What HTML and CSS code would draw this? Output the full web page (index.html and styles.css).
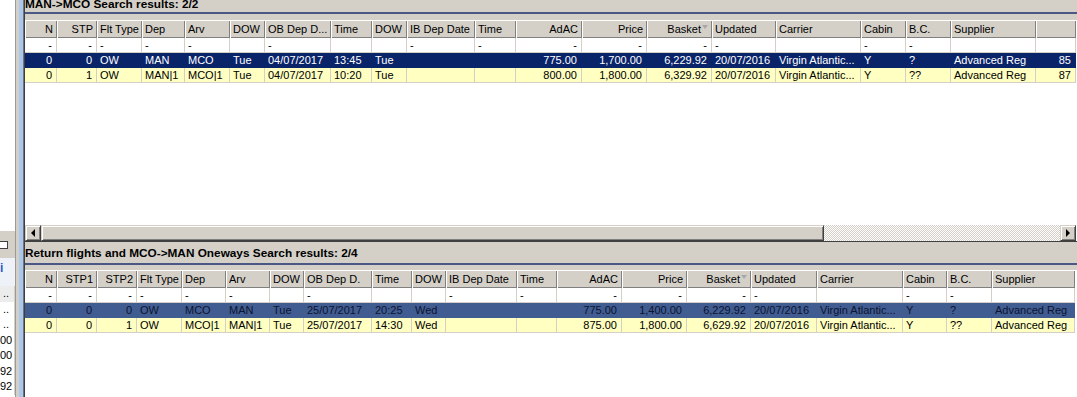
FILE: index.html
```html
<!DOCTYPE html>
<html>
<head>
<meta charset="utf-8">
<link rel="stylesheet" href="styles.css">
</head>
<body>
<div class="app">
  <aside class="side">
    <div class="side-top"></div>
    <div class="side-tool"><span class="side-box"></span></div>
    <div class="side-head"><span class="side-i">i</span></div>
    <div class="side-row shade">..</div>
    <div class="side-row">..</div>
    <div class="side-row">..</div>
    <div class="side-row">00</div>
    <div class="side-row">00</div>
    <div class="side-row">92</div>
    <div class="side-row">92</div>
  </aside>
  <div class="vsplit"></div>
  <main class="main">
    <section class="pane pane-top">
      <div class="title">MAN-&gt;MCO Search results: 2/2</div>
      <div class="grid grid-top">
        <div class="row head">
          <div class="c r">N</div><div class="c r">STP</div><div class="c">Flt Type</div><div class="c">Dep</div><div class="c">Arv</div><div class="c">DOW</div><div class="c">OB Dep D...</div><div class="c">Time</div><div class="c">DOW</div><div class="c">IB Dep Date</div><div class="c">Time</div><div class="c r">AdAC</div><div class="c r">Price</div><div class="c r">Basket<span class="sort"></span></div><div class="c">Updated</div><div class="c">Carrier</div><div class="c">Cabin</div><div class="c">B.C.</div><div class="c">Supplier</div><div class="c"></div>
        </div>
        <div class="row">
          <div class="c r">-</div><div class="c r">-</div><div class="c">-</div><div class="c">-</div><div class="c">-</div><div class="c"></div><div class="c">-</div><div class="c"></div><div class="c"></div><div class="c">-</div><div class="c">-</div><div class="c r">-</div><div class="c r">-</div><div class="c r">-</div><div class="c">-</div><div class="c"></div><div class="c">-</div><div class="c">-</div><div class="c"></div><div class="c"></div>
        </div>
        <div class="row sel">
          <div class="c r">0</div><div class="c r">0</div><div class="c">OW</div><div class="c">MAN</div><div class="c">MCO</div><div class="c">Tue</div><div class="c">04/07/2017</div><div class="c">13:45</div><div class="c">Tue</div><div class="c"></div><div class="c"></div><div class="c r">775.00</div><div class="c r">1,700.00</div><div class="c r">6,229.92</div><div class="c">20/07/2016</div><div class="c">Virgin Atlantic...</div><div class="c">Y</div><div class="c">?</div><div class="c">Advanced Reg</div><div class="c r">85</div>
        </div>
        <div class="row alt">
          <div class="c r">0</div><div class="c r">1</div><div class="c">OW</div><div class="c">MAN|1</div><div class="c">MCO|1</div><div class="c">Tue</div><div class="c">04/07/2017</div><div class="c">10:20</div><div class="c">Tue</div><div class="c"></div><div class="c"></div><div class="c r">800.00</div><div class="c r">1,800.00</div><div class="c r">6,329.92</div><div class="c">20/07/2016</div><div class="c">Virgin Atlantic...</div><div class="c">Y</div><div class="c">??</div><div class="c">Advanced Reg</div><div class="c r">87</div>
        </div>
        <div class="grid-empty"></div>
        <div class="hscroll">
          <span class="sb-btn"><span class="arrow-left"></span></span>
          <span class="sb-thumb"></span>
          <span class="sb-track"></span>
          <span class="sb-btn"><span class="arrow-right"></span></span>
        </div>
      </div>
    </section>
    <section class="pane pane-bottom">
      <div class="title">Return flights and MCO-&gt;MAN Oneways Search results: 2/4</div>
      <div class="grid grid-bottom">
        <div class="row head">
          <div class="c r">N</div><div class="c r">STP1</div><div class="c r">STP2</div><div class="c">Flt Type</div><div class="c">Dep</div><div class="c">Arv</div><div class="c">DOW</div><div class="c">OB Dep D.</div><div class="c">Time</div><div class="c">DOW</div><div class="c">IB Dep Date</div><div class="c">Time</div><div class="c r">AdAC</div><div class="c r">Price</div><div class="c r">Basket<span class="sort"></span></div><div class="c">Updated</div><div class="c">Carrier</div><div class="c">Cabin</div><div class="c">B.C.</div><div class="c">Supplier</div>
        </div>
        <div class="row">
          <div class="c r">-</div><div class="c r">-</div><div class="c r">-</div><div class="c">-</div><div class="c">-</div><div class="c">-</div><div class="c"></div><div class="c">-</div><div class="c"></div><div class="c"></div><div class="c">-</div><div class="c">-</div><div class="c r">-</div><div class="c r">-</div><div class="c r">-</div><div class="c">-</div><div class="c"></div><div class="c">-</div><div class="c">-</div><div class="c"></div>
        </div>
        <div class="row sel2">
          <div class="c r">0</div><div class="c r">0</div><div class="c r">0</div><div class="c">OW</div><div class="c">MCO</div><div class="c">MAN</div><div class="c">Tue</div><div class="c">25/07/2017</div><div class="c">20:25</div><div class="c">Wed</div><div class="c"></div><div class="c"></div><div class="c r">775.00</div><div class="c r">1,400.00</div><div class="c r">6,229.92</div><div class="c">20/07/2016</div><div class="c">Virgin Atlantic...</div><div class="c">Y</div><div class="c">?</div><div class="c">Advanced Reg</div>
        </div>
        <div class="row alt">
          <div class="c r">0</div><div class="c r">0</div><div class="c r">1</div><div class="c">OW</div><div class="c">MCO|1</div><div class="c">MAN|1</div><div class="c">Tue</div><div class="c">25/07/2017</div><div class="c">14:30</div><div class="c">Wed</div><div class="c"></div><div class="c"></div><div class="c r">875.00</div><div class="c r">1,800.00</div><div class="c r">6,629.92</div><div class="c">20/07/2016</div><div class="c">Virgin Atlantic...</div><div class="c">Y</div><div class="c">??</div><div class="c">Advanced Reg</div>
        </div>
        <div class="grid-empty"></div>
      </div>
    </section>
  </main>
</div>
</body>
</html>
```
FILE: styles.css
```css
html, body {
  margin: 0;
  padding: 0;
  overflow: hidden;
}
body {
  font-family: "Liberation Sans", Arial, sans-serif;
  font-size: 11px;
  color: #000;
  background: #d4d0c8;
}
.app {
  display: flex;
  width: 1077px;
  height: 397px;
  overflow: hidden;
}

/* left clipped panel */
.side {
  width: 15px;
  flex: none;
  background: #fff;
  display: flex;
  flex-direction: column;
  overflow: hidden;
}
.side-top { height: 230px; flex: none; }
.side-tool {
  height: 28px;
  flex: none;
  box-sizing: border-box;
  padding-top: 10px;
  background: #d4d0c8;
  border-top: 1px solid #fff;
}
.side-box {
  display: block;
  width: 8px;
  height: 8px;
  box-sizing: border-box;
  border: 1px solid #404040;
  border-left: none;
  background: #fff;
}
.side-head {
  height: 28px;
  flex: none;
  box-sizing: border-box;
  padding-top: 3px;
  background: #eef2f8;
}
.side-i {
  display: block;
  font-weight: bold;
  font-size: 12px;
  color: #2a5cc8;
}
.side-row {
  height: 15.5px;
  line-height: 15px;
  flex: none;
  text-align: right;
  padding-right: 5px;
  border-right: 1px solid #d4d0c8;
  white-space: nowrap;
  overflow: hidden;
}
.side-row.shade { background: #ececec; }

/* vertical splitter */
.vsplit {
  width: 10px;
  flex: none;
  background: linear-gradient(to right,
    #9c9a94 0 1px, #d4d0c8 1px 4px, #a9c8ec 4px 8px, #6d7585 8px 9px, #3f3f3f 9px 10px);
}

.main {
  flex: 1;
  min-width: 0;
  display: flex;
  flex-direction: column;
  overflow: hidden;
}
.pane {
  display: flex;
  flex-direction: column;
  min-height: 0;
}
.pane-top { height: 242px; flex: none; }
.pane-bottom { flex: 1; }

.title {
  font-weight: bold;
  font-size: 11.8px;
  line-height: 15px;
  height: 15px;
  white-space: nowrap;
  border-bottom: 2px solid #4b5886;
  flex: none;
}
.pane-top .title { margin-top: -3px; margin-bottom: 6px; }
.pane-bottom .title { padding-top: 4px; padding-bottom: 2px; margin-bottom: 5px; }

.grid {
  background: #fff;
  display: flex;
  flex-direction: column;
  flex: 1;
  min-height: 0;
}
.grid-top {
  --cols: 32px 40px 45px 43px 45px 35px 66px 41px 35px 68px 41px 66px 65px 65px 64px 85px 45px 45px 85px 40px;
  border-bottom: 1px solid #404040;
}
.grid-bottom {
  --cols: 32px 40px 40px 45px 44px 44px 34px 68px 40px 34px 71px 40px 65px 65px 64px 66px 86px 44px 45px 83px;
}
.row {
  display: grid;
  grid-template-columns: var(--cols);
  flex: none;
}
.c {
  box-sizing: border-box;
  height: 15px;
  line-height: 14px;
  padding: 0 3px;
  border-right: 1px solid #d4d0c8;
  border-bottom: 1px solid #d4d0c8;
  white-space: nowrap;
  overflow: hidden;
}
.c.r { text-align: right; padding-right: 4px; }
.head .c {
  height: 18px;
  line-height: 18px;
  background: #d4d0c8;
  border: none;
  box-shadow: inset 1px 1px #fff, inset -1px -1px #808080;
}
.sort {
  display: inline-block;
  width: 0;
  height: 0;
  margin-left: 1px;
  border-left: 3.5px solid transparent;
  border-right: 3.5px solid transparent;
  border-top: 4px solid #a8a8a8;
  vertical-align: 4px;
}
.sel .c {
  background: #0a246a;
  color: #fff;
  border-color: #0a246a;
}
.sel2 .c {
  background: #415c91;
  color: #0b1430;
  border-color: #415c91;
}
.alt .c { background: #ffffc2; }

.grid-empty { flex: 1; }

.hscroll {
  display: flex;
  height: 16px;
  flex: none;
  margin-right: 1px;
}
.sb-btn, .sb-thumb {
  box-sizing: border-box;
  background: #d4d0c8;
  border-top: 1px solid #d4d0c8;
  border-left: 1px solid #d4d0c8;
  border-right: 1px solid #404040;
  border-bottom: 1px solid #404040;
  box-shadow: inset 1px 1px #fff, inset -1px -1px #808080;
}
.sb-btn {
  width: 16px;
  flex: none;
  display: flex;
  align-items: center;
  justify-content: center;
}
.sb-thumb { width: 783px; flex: none; }
.sb-track {
  flex: 1;
  background: repeating-conic-gradient(#fff 0 25%, #d4d0c8 0 50%) 0 0 / 2px 2px;
}
.arrow-left {
  width: 0; height: 0;
  border-top: 4px solid transparent;
  border-bottom: 4px solid transparent;
  border-right: 4px solid #000;
}
.arrow-right {
  width: 0; height: 0;
  border-top: 4px solid transparent;
  border-bottom: 4px solid transparent;
  border-left: 4px solid #000;
}
```
